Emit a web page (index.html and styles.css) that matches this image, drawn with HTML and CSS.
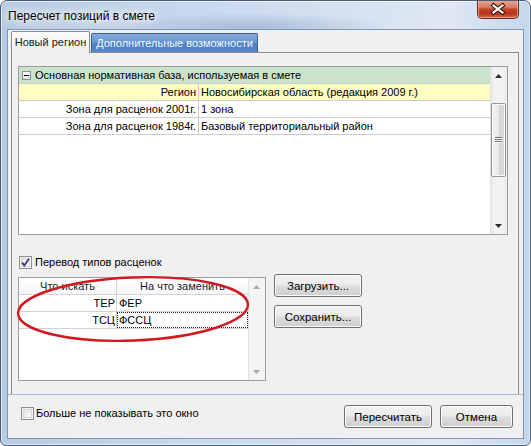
FILE: index.html
```html
<!DOCTYPE html>
<html>
<head>
<meta charset="utf-8">
<title>Пересчет позиций в смете</title>
<link rel="stylesheet" href="styles.css">
</head>
<body>
<div class="window">
  <div class="titlebar">
    <span class="title">Пересчет позиций в смете</span>
    <div class="close">
      <svg width="40" height="17" viewBox="0 0 40 17">
        <path d="M15.5 4.5 L24.5 11.5 M24.5 4.5 L15.5 11.5" stroke="#3a1710" stroke-width="4.2" stroke-linecap="square" fill="none"/>
        <path d="M15.5 4.5 L24.5 11.5 M24.5 4.5 L15.5 11.5" stroke="#ffffff" stroke-width="2.2" stroke-linecap="square" fill="none"/>
      </svg>
    </div>
  </div>
  <div class="client">
    <div class="tabarea">
      <div class="tabs">
        <div class="tab active">Новый регион</div>
        <div class="tab inactive">Дополнительные возможности</div>
      </div>
      <div class="page">
        <div class="grid1">
          <div class="rows">
            <div class="row group"><span class="minus"></span>Основная нормативная база, используемая в смете</div>
            <div class="row yellow"><div class="c1">Регион</div><div class="c2">Новосибирская область (редакция 2009 г.)</div></div>
            <div class="row"><div class="c1">Зона для расценок 2001г.</div><div class="c2">1 зона</div></div>
            <div class="row"><div class="c1">Зона для расценок 1984г.</div><div class="c2">Базовый территориальный район</div></div>
          </div>
          <div class="vscroll">
            <div class="sbtn"><svg width="7" height="4" viewBox="0 0 7 4"><path d="M3.5 0 L7 4 L0 4 Z" fill="#2c2c2c"/></svg></div>
            <div class="track">
              <div class="thumb">
                <svg width="7" height="6" viewBox="0 0 7 6"><path d="M0 0.5H7M0 2.5H7M0 4.5H7" stroke="#6e6e6e" stroke-width="1"/><path d="M0 1.5H7M0 3.5H7M0 5.5H7" stroke="#ffffff" stroke-width="1"/></svg>
              </div>
            </div>
            <div class="sbtn"><svg width="7" height="4" viewBox="0 0 7 4"><path d="M0 0 L7 0 L3.5 4 Z" fill="#2c2c2c"/></svg></div>
          </div>
        </div>

        <div class="chk first">
          <span class="box">
            <svg width="13" height="13" viewBox="0 0 13 13"><path d="M3 6.5 L5.3 9.5 L10 2.8" stroke="#2e3e66" stroke-width="1.8" fill="none"/></svg>
          </span>
          <span class="chklabel">Перевод типов расценок</span>
        </div>

        <div class="lower">
          <div class="grid2">
            <div class="rows2">
              <div class="row2 head"><div class="d1">Что искать</div><div class="d2">На что заменить</div></div>
              <div class="row2"><div class="d1 right">ТЕР</div><div class="d2 left">ФЕР</div></div>
              <div class="row2"><div class="d1 right">ТСЦ</div><div class="d2 left focus">ФССЦ</div></div>
            </div>
            <div class="vscroll dis">
              <div class="sbtn"><svg width="7" height="4" viewBox="0 0 7 4"><path d="M3.5 0 L7 4 L0 4 Z" fill="#a8a8a8"/></svg></div>
              <div class="track"></div>
              <div class="sbtn"><svg width="7" height="4" viewBox="0 0 7 4"><path d="M0 0 L7 0 L3.5 4 Z" fill="#a8a8a8"/></svg></div>
            </div>
          </div>
          <div class="btncol">
            <button class="btn side">Загрузить...</button>
            <button class="btn side">Сохранить...</button>
          </div>
        </div>

        <svg class="ellipse" width="262" height="84" viewBox="0 0 262 84">
          <ellipse cx="121" cy="42" rx="115" ry="31.5" transform="rotate(-2.3 121 42)" fill="none" stroke="#d2191f" stroke-width="2.4"/>
        </svg>
      </div>
    </div>
    <div class="footer">
      <div class="chk bottom">
        <span class="box"></span>
        <span class="chklabel">Больше не показывать это окно</span>
      </div>
      <button class="btn recalc">Пересчитать</button>
      <button class="btn cancel">Отмена</button>
    </div>
  </div>
</div>
</body>
</html>
```

FILE: styles.css
```css
html, body {
  margin: 0;
  padding: 0;
  background: #ffffff;
}

body {
  font-family: "Liberation Sans", Arial, sans-serif;
  color: #000;
}

.window {
  width: 531px;
  height: 446px;
  box-sizing: border-box;
  border: 1px solid #4c5d76;
  border-radius: 7px 7px 6px 6px;
  display: flex;
  flex-direction: column;
  overflow: hidden;
  background:
    radial-gradient(ellipse 140px 14px at 250px 26px, rgba(120,150,190,0.45), rgba(120,150,190,0) 100%),
    linear-gradient(to right, #b7cbe4 0%, #c5d6eb 30%, #d3e0f0 60%, #dfe8f4 85%, #c4d6ec 100%);
  box-shadow: inset 0 0 0 1px rgba(255,255,255,0.55);
}

.titlebar {
  height: 28px;
  flex: none;
  display: flex;
  justify-content: space-between;
  align-items: flex-start;
}

.title {
  margin: 8px 0 0 7px;
  font-size: 12px;
  line-height: 15px;
  color: #000;
  text-shadow: 0 0 6px #ffffff, 0 0 10px #ffffff, 0 0 14px rgba(255,255,255,0.9);
}

.close {
  width: 42px;
  height: 19px;
  box-sizing: border-box;
  margin: -1px 11px 0 0;
  border: 1px solid #6b2a1f;
  border-top: none;
  border-radius: 0 0 5px 5px;
  background: linear-gradient(#e8ab98 0%, #d77a62 40%, #c0452b 52%, #b7331a 75%, #d3664a 100%);
  box-shadow: inset 0 0 0 1px rgba(255,220,210,0.5);
  display: flex;
  align-items: center;
  justify-content: center;
}

.close svg { display: block; }

.client {
  flex: 1;
  margin: 0 6px 6px 6px;
  border: 1px solid #7d96ba;
  background: #f0f0f0;
  display: flex;
  flex-direction: column;
}

.tabarea {
  height: 364px;
  flex: none;
  border-bottom: 1px solid #a7b9d2;
  padding: 0 4px 0 3px;
  display: flex;
  flex-direction: column;
}

.tabs {
  height: 22px;
  flex: none;
  display: flex;
  align-items: flex-end;
}

.tab {
  box-sizing: border-box;
  font-size: 11px;
  text-align: center;
  white-space: nowrap;
}

.tab.active {
  width: 79px;
  height: 22px;
  margin-bottom: -1px;
  position: relative;
  z-index: 1;
  border: 1px solid #898c95;
  border-bottom: none;
  border-radius: 2px 2px 0 0;
  background: linear-gradient(#fdfdfd, #f3f3f3 60%, #f0f0f0);
  line-height: 21px;
  color: #1a1a1a;
}

.tab.inactive {
  width: 167px;
  height: 19px;
  margin-left: 1px;
  border: 1px solid #3d5f90;
  border-bottom: none;
  border-radius: 2px 2px 0 0;
  background: linear-gradient(#86acdc 0%, #6a97d2 45%, #4c80c6 55%, #5588cb 100%);
  line-height: 18px;
  color: #f4f7fb;
}

.page {
  flex: 1;
  position: relative;
  border: 1px solid #898c95;
  border-bottom: none;
  background: #f0f0f0;
  padding: 13px 10px 0 6px;
}

/* ---------- top grid ---------- */
.grid1 {
  height: 169px;
  box-sizing: border-box;
  border: 1px solid #9c9c9c;
  background: #ffffff;
  display: flex;
}

.rows {
  flex: 1;
  min-width: 0;
}

.row {
  height: 16px;
  border-bottom: 1px solid #cdcdcd;
  display: flex;
  font-size: 11px;
  line-height: 16px;
  white-space: nowrap;
}

.row.group {
  background: #cbe3cc;
  align-items: center;
  padding-left: 3px;
}

.row.yellow {
  background: #ffffc2;
}

.minus {
  width: 9px;
  height: 9px;
  box-sizing: border-box;
  border: 1px solid #8d8d8d;
  background: linear-gradient(#ffffff, #e2e2e2);
  margin-right: 4px;
  position: relative;
  flex: none;
}

.minus::after {
  content: "";
  position: absolute;
  left: 1px;
  top: 3px;
  width: 5px;
  height: 1px;
  background: #000;
}

.c1 {
  width: 180px;
  flex: none;
  box-sizing: border-box;
  border-right: 1px solid #cdcdcd;
  text-align: right;
  padding-right: 2px;
}

.c2 {
  flex: 1;
  padding-left: 2px;
}

/* ---------- scrollbars ---------- */
.vscroll {
  width: 17px;
  flex: none;
  display: flex;
  flex-direction: column;
  background: linear-gradient(to right, #e6e6e6, #f3f3f3 30%, #f3f3f3 70%, #ebebeb);
  box-shadow: inset 1px 0 0 #e2e2e2;
}

.sbtn {
  height: 17px;
  flex: none;
  display: flex;
  align-items: center;
  justify-content: center;
}

.sbtn svg { display: block; }

.track {
  flex: 1;
}

.thumb {
  margin: 19px 1px 0 1px;
  height: 74px;
  box-sizing: border-box;
  border: 1px solid #979797;
  border-radius: 2px;
  background: linear-gradient(to right, #f4f4f4, #e9e9e9 50%, #d6d6d6 51%, #d9d9d9);
  box-shadow: inset 0 0 0 1px #fbfbfb;
  display: flex;
  align-items: center;
  justify-content: center;
}

.thumb svg { display: block; }

.vscroll.dis {
  background: #f4f4f4;
}

/* ---------- check boxes ---------- */
.chk {
  display: flex;
  align-items: center;
  height: 13px;
  font-size: 11px;
}

.chk.first {
  margin-top: 21px;
  margin-left: 1px;
}

.box {
  width: 13px;
  height: 13px;
  box-sizing: border-box;
  border: 1px solid #8e8f8f;
  background: linear-gradient(135deg, #dcdcdc, #f6f6f6 70%, #ffffff);
  box-shadow: inset 0 0 0 1px #f4f4f4, inset 0 0 0 2px #d6d6d6;
  flex: none;
  position: relative;
}

.box svg {
  position: absolute;
  left: -1px;
  top: -1px;
}

.chklabel {
  margin-left: 3px;
  white-space: nowrap;
  line-height: 13px;
}

/* ---------- lower grid ---------- */
.lower {
  margin-top: 5px;
  display: flex;
  align-items: flex-start;
}

.grid2 {
  width: 248px;
  height: 104px;
  margin-top: 3px;
  box-sizing: border-box;
  border: 1px solid #9c9c9c;
  background: #ffffff;
  display: flex;
}

.rows2 {
  flex: 1;
  min-width: 0;
}

.row2 {
  height: 16px;
  border-bottom: 1px solid #d2d2d2;
  display: flex;
  font-size: 11px;
  line-height: 16px;
  white-space: nowrap;
}

.row2.head {
  background: linear-gradient(#ffffff, #f6f7f9);
  border-bottom-color: #d5d5d5;
  color: #1e1e1e;
}

.d1 {
  width: 98px;
  flex: none;
  box-sizing: border-box;
  border-right: 1px solid #d2d2d2;
  text-align: center;
}

.d2 {
  flex: 1;
  text-align: center;
  box-sizing: border-box;
}

.d1.right {
  text-align: right;
  padding-right: 1px;
}

.d2.left {
  text-align: left;
  padding-left: 2px;
}

.d2.focus {
  border: 1px dotted #222;
  line-height: 14px;
  padding-left: 1px;
}

.btncol {
  margin-left: 8px;
  display: flex;
  flex-direction: column;
  gap: 8px;
}

.btn {
  box-sizing: border-box;
  height: 23px;
  padding: 0;
  border: 1px solid #707070;
  border-radius: 3px;
  background: linear-gradient(#f2f2f2 0%, #ebebeb 48%, #dddddd 52%, #cfcfcf 100%);
  box-shadow: inset 0 0 0 1px #fbfbfb;
  font-family: "Liberation Sans", Arial, sans-serif;
  font-size: 11.5px;
  color: #000;
  text-align: center;
}

.btn.side {
  width: 88px;
}

.ellipse {
  position: absolute;
  left: 0;
  top: 214px;
  pointer-events: none;
}

/* ---------- footer ---------- */
.footer {
  flex: 1;
  display: flex;
  align-items: flex-start;
  padding: 10px 10px 0 13px;
}

.chk.bottom {
  margin-top: 2px;
}

.chk.bottom .chklabel {
  margin-left: 2px;
}

.btn.recalc {
  width: 88px;
  margin-left: auto;
}

.btn.cancel {
  width: 73px;
  margin-left: 8px;
}
```
